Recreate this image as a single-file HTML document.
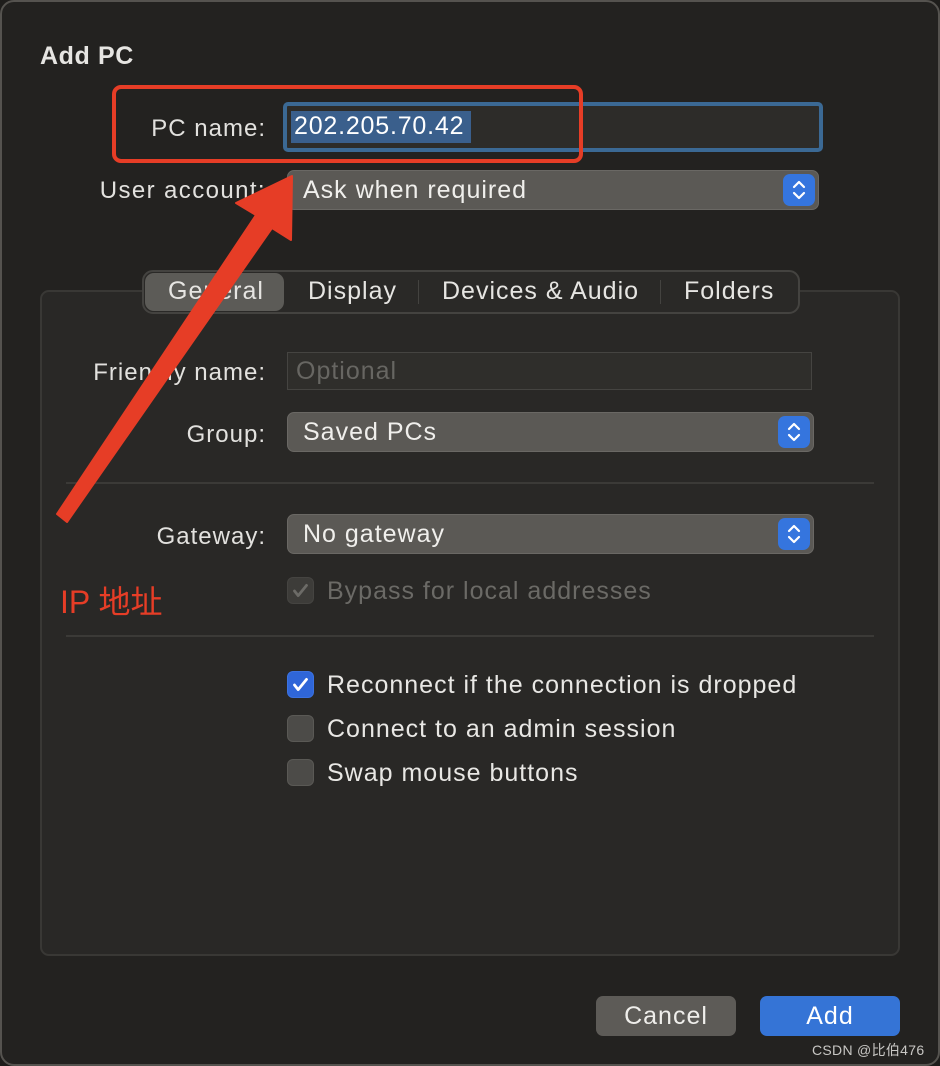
<!DOCTYPE html>
<html><head><meta charset="utf-8"><style>
*{box-sizing:border-box;margin:0;padding:0}
body{width:940px;height:1066px;background:#1e1d1b;font-family:"Liberation Sans","Noto Sans CJK SC",sans-serif;color:#e4e3e0;position:relative;overflow:hidden;letter-spacing:1px}
.win{position:absolute;left:0;top:0;width:940px;height:1066px;background:#232220;border:2px solid #55534f;border-radius:14px}
.a{position:absolute;white-space:nowrap}
.lbl{position:absolute;font-size:24px;text-align:right;right:674px;color:#e2e1de;white-space:nowrap}
.pop{position:absolute;background:#5b5955;border-radius:7px;border:1px solid #6a6864}
.pop span{position:absolute;left:15px;top:5px;font-size:25px;color:#f0efec;white-space:nowrap}
.step{position:absolute;right:3px;top:3px;width:32px;height:32px;background:#3575de;border-radius:7px}
.cb{position:absolute;left:287px;width:27px;height:27px;border-radius:6px;background:#4c4b48;border:1px solid #5a5955}
.ct{position:absolute;left:327px;font-size:25px;color:#e8e7e4;white-space:nowrap}
.sep{position:absolute;left:66px;width:808px;height:2px;background:#3b3a37}
.tab{font-size:25px;color:#e6e5e2}
</style></head><body>
<div class="win"></div>
<div class="a" style="left:40px;top:42px;font-size:25px;font-weight:bold;color:#e6e5e2;letter-spacing:0.6px">Add PC</div>

<div class="lbl" style="top:115px">PC name:</div>
<div class="a" style="left:283px;top:102px;width:540px;height:50px;border:4px solid #3b6994;border-radius:5px;background:#2d2c29"></div>
<div class="a" style="left:291px;top:111px;width:180px;height:32px;background:#3a5f8c"></div>
<div class="a" style="left:294px;top:112px;font-size:25px;color:#fff;letter-spacing:0.8px">202.205.70.42</div>
<div class="a" style="left:112px;top:85px;width:471px;height:78px;border:4px solid #e63d26;border-radius:9px"></div>

<div class="lbl" style="top:177px;letter-spacing:1.4px">User account:</div>
<div class="pop" style="left:287px;top:170px;width:532px;height:40px"><span>Ask when required</span>
<svg class="step" viewBox="0 0 32 32"><path d="M11 13l5-5 5 5M11 19l5 5 5-5" fill="none" stroke="#fff" stroke-width="2.2" stroke-linecap="round" stroke-linejoin="round"/></svg></div>

<div class="a" style="left:40px;top:290px;width:860px;height:666px;background:#292826;border:2px solid #393835;border-radius:9px"></div>
<div class="a" style="left:142px;top:270px;width:658px;height:44px;background:#2a2927;border:2px solid #444340;border-radius:11px"></div>
<div class="a" style="left:145px;top:273px;width:139px;height:38px;background:#5c5b57;border-radius:9px"></div>
<div class="a tab" style="left:168px;top:277px">General</div>
<div class="a tab" style="left:308px;top:277px">Display</div>
<div class="a" style="left:418px;top:280px;width:1px;height:24px;background:#444340"></div>
<div class="a tab" style="left:442px;top:277px">Devices &amp; Audio</div>
<div class="a" style="left:660px;top:280px;width:1px;height:24px;background:#444340"></div>
<div class="a tab" style="left:684px;top:277px">Folders</div>

<div class="lbl" style="top:359px">Friendly name:</div>
<div class="a" style="left:287px;top:352px;width:525px;height:38px;background:#2f2e2b;border:1px solid #454441"></div>
<div class="a" style="left:296px;top:357px;font-size:25px;color:#676662">Optional</div>

<div class="lbl" style="top:421px">Group:</div>
<div class="pop" style="left:287px;top:412px;width:527px;height:40px"><span>Saved PCs</span>
<svg class="step" viewBox="0 0 32 32"><path d="M11 13l5-5 5 5M11 19l5 5 5-5" fill="none" stroke="#fff" stroke-width="2.2" stroke-linecap="round" stroke-linejoin="round"/></svg></div>

<div class="sep" style="top:482px"></div>

<div class="lbl" style="top:523px">Gateway:</div>
<div class="pop" style="left:287px;top:514px;width:527px;height:40px"><span>No gateway</span>
<svg class="step" viewBox="0 0 32 32"><path d="M11 13l5-5 5 5M11 19l5 5 5-5" fill="none" stroke="#fff" stroke-width="2.2" stroke-linecap="round" stroke-linejoin="round"/></svg></div>

<svg class="cb" style="top:577px;background:#3d3c39;border-color:#454441" viewBox="0 0 27 27"><path d="M7 14l4 5 9-11" fill="none" stroke="#6c6b67" stroke-width="3" stroke-linecap="round" stroke-linejoin="round"/></svg>
<div class="ct" style="top:577px;color:#6b6a66">Bypass for local addresses</div>
<div class="a" style="left:60px;top:577px;font-size:32px;color:#e63d26;letter-spacing:0">IP 地址</div>

<div class="sep" style="top:635px"></div>

<svg class="cb" style="top:671px;background:#2f66d8;border-color:#3b72e0" viewBox="0 0 27 27"><path d="M7 14l4 5 9-11" fill="none" stroke="#fff" stroke-width="3" stroke-linecap="round" stroke-linejoin="round"/></svg>
<div class="ct" style="top:671px">Reconnect if the connection is dropped</div>
<div class="cb" style="top:715px"></div>
<div class="ct" style="top:715px">Connect to an admin session</div>
<div class="cb" style="top:759px"></div>
<div class="ct" style="top:759px">Swap mouse buttons</div>

<div class="a" style="left:596px;top:996px;width:140px;height:40px;background:#5d5b57;border-radius:7px;text-align:center;font-size:25px;line-height:40px;color:#efeeeb">Cancel</div>
<div class="a" style="left:760px;top:996px;width:140px;height:40px;background:#3574d6;border-radius:7px;text-align:center;font-size:25px;line-height:40px;color:#fff">Add</div>
<div class="a" style="left:812px;top:1040px;font-size:14px;color:#c8c7c4;letter-spacing:0.3px">CSDN @比伯476</div>

<svg class="a" style="left:0;top:0" width="940" height="1066"><polygon points="57,514 67,522 272,228 291,240 292,176 236,203 256,215" fill="#e63d26" stroke="#e63d26" stroke-width="2" stroke-linejoin="round"/></svg>
</body></html>
